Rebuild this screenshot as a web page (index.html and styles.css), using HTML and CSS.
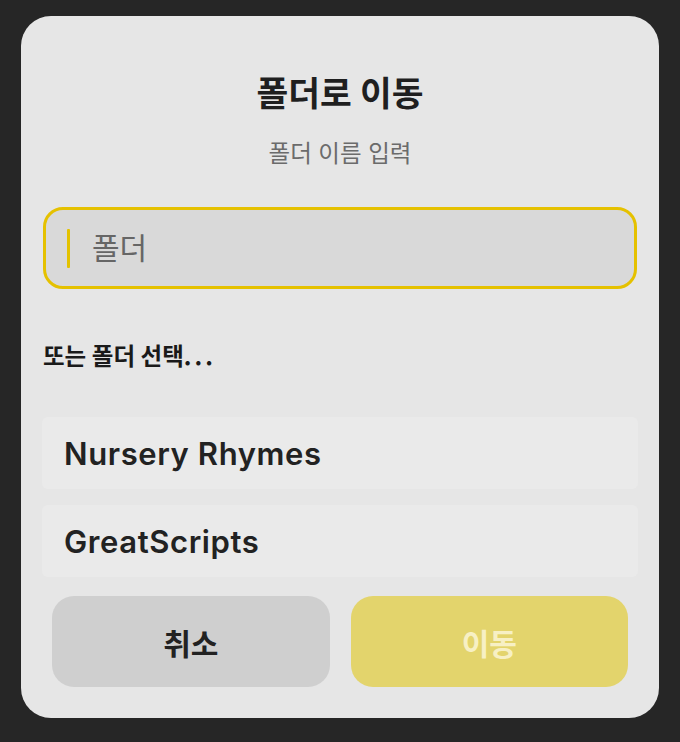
FILE: index.html
```html
<!DOCTYPE html>
<html lang="ko">
<head>
<meta charset="utf-8">
<link rel="stylesheet" href="styles.css">
</head>
<body>
<div class="dialog">
  <h1 class="title">폴더로 이동</h1>
  <p class="subtitle">폴더 이름 입력</p>
  <div class="field">
    <span class="caret"></span>
    <span class="placeholder">폴더</span>
  </div>
  <p class="section">또는 폴더 선택<span class="dots">...</span></p>
  <ul class="list">
    <li class="row">Nursery Rhymes</li>
    <li class="row">GreatScripts</li>
  </ul>
  <div class="actions">
    <button class="btn cancel">취소</button>
    <button class="btn move">이동</button>
  </div>
</div>
</body>
</html>
```
FILE: styles.css
```css
html, body {
  margin: 0;
  padding: 0;
  background: #262626;
  height: 742px;
  overflow: hidden;
}
body {
  font-family: Inter, "Noto Sans CJK KR", "Noto Sans", sans-serif;
  padding-top: 16px;
  box-sizing: border-box;
}
.dialog {
  margin: 0 21px;
  width: 638px;
  height: 702px;
  box-sizing: border-box;
  background: #e6e6e6;
  border-radius: 30px;
  padding: 58px 22px 0;
  display: flex;
  flex-direction: column;
}
.title {
  margin: 0;
  font-size: 34.5px;
  line-height: 40px;
  font-weight: 700;
  color: #1f1f1f;
  text-align: center;
}
.subtitle {
  margin: 26px 0 0;
  font-size: 23.5px;
  line-height: 28px;
  font-weight: 400;
  color: #6b6b6b;
  text-align: center;
}
.field {
  margin-top: 39px;
  height: 82px;
  box-sizing: border-box;
  border: 3px solid #e5c100;
  border-radius: 20px;
  background: #d9d9d9;
  display: flex;
  align-items: center;
  padding-left: 21px;
  gap: 22px;
}
.caret {
  width: 3px;
  height: 39px;
  background: #e3c200;
  border-radius: 1px;
}
.placeholder {
  font-size: 30px;
  line-height: 36px;
  color: #666666;
}
.section {
  margin: 54px 0 0;
  height: 28px;
  font-size: 23.5px;
  line-height: 28px;
  font-weight: 700;
  color: #1a1a1a;
}
.dots {
  font-family: "Noto Sans CJK KR", sans-serif;
  letter-spacing: 3px;
  line-height: 1;
}
.list {
  list-style: none;
  margin: 46px -1px 0;
  padding: 0;
  display: flex;
  flex-direction: column;
  gap: 16px;
}
.row {
  height: 72px;
  display: flex;
  align-items: center;
  padding-left: 22px;
  background: #eaeaea;
  border-radius: 6px;
  font-size: 31px;
  letter-spacing: 0.6px;
  font-weight: 600;
  color: #222222;
}
.actions {
  margin: 19px 9px 0;
  display: flex;
  gap: 21px;
}
.btn {
  flex: 1;
  height: 91px;
  border: none;
  border-radius: 22px;
  font-family: inherit;
  font-size: 30px;
  font-weight: 700;
  padding: 0;
}
.cancel {
  background: #cfcfcf;
  color: #222222;
}
.move {
  background: #e3d46c;
  color: #f7f0c4;
}
```
